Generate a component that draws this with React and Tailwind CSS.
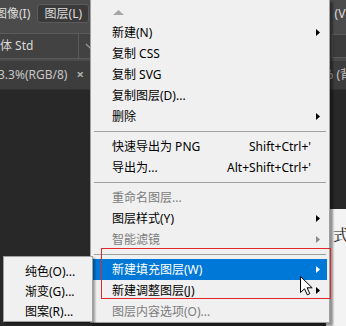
import React from 'react';

const items = [
  { label: '新建(N)', arrow: true },
  { label: '复制 CSS' },
  { label: '复制 SVG' },
  { label: '复制图层(D)...' },
  { label: '删除', arrow: true },
  'sep',
  { label: '快速导出为 PNG', shortcut: "Shift+Ctrl+'" },
  { label: '导出为...', shortcut: "Alt+Shift+Ctrl+'" },
  'sep',
  { label: '重命名图层...', disabled: true },
  { label: '图层样式(Y)', arrow: true },
  { label: '智能滤镜', arrow: true, disabled: true },
  'sep',
  { label: '新建填充图层(W)', arrow: true, active: true },
  { label: '新建调整图层(J)', arrow: true },
  { label: '图层内容选项(O)...', disabled: true },
];

const subItems = ['纯色(O)...', '渐变(G)...', '图案(R)...'];

const Arrow = ({ color }) => (
  <svg width="4" height="7" viewBox="0 0 4 7" className="shrink-0">
    <path d="M0 0 L4 3.5 L0 7 Z" fill={color} />
  </svg>
);

const MenuRow = ({ item }) => {
  const text = item.active ? 'text-white' : item.disabled ? 'text-[#7c7c7c]' : 'text-black';
  const arrowColor = item.active ? '#ffffff' : item.disabled ? '#8a8a8a' : '#000000';
  return (
    <div className={`flex items-center h-[21px] pl-[19px] pr-[7px] leading-[21px] ${text} ${item.active ? 'bg-[#0078d7]' : ''}`}>
      <span className="flex-1 whitespace-nowrap">{item.label}</span>
      {item.shortcut && <span className="mr-[5px] whitespace-nowrap">{item.shortcut}</span>}
      {item.arrow ? <Arrow color={arrowColor} /> : <span className="w-[4px]" />}
    </div>
  );
};

export default function App() {
  return (
    <div className="relative w-[346px] h-[326px] overflow-hidden flex flex-col bg-[#282828] text-[12px] font-['Noto_Sans','Noto_Sans_CJK_SC',sans-serif]">
      {/* menu bar */}
      <div className="h-[31px] shrink-0 bg-[#4b4b4b] flex items-start pt-[4px] text-[#dcdcdc]">
        <span className="ml-[-5px] h-[19px] leading-[19px] whitespace-nowrap">图像(I)</span>
        <span className="ml-[7px] w-[52px] h-[19px] leading-[17px] text-center rounded-[3px] bg-[#3a3a3a] border border-[#5c5c5c] whitespace-nowrap">图层(L)</span>
        <span className="ml-auto mr-[-3px] h-[19px] leading-[19px] whitespace-nowrap">(V)</span>
      </div>

      {/* options bar */}
      <div className="h-[30px] shrink-0 bg-[#4b4b4b] flex items-center text-[#d8d8d8]">
        <div className="w-[102px] h-[26px] flex items-center bg-[#424242] border border-[#5a5a5a] border-l-0">
          <span className="flex-1 whitespace-nowrap">体 Std</span>
          <span className="w-px h-full bg-[#5a5a5a]" />
          <svg width="22" height="10" viewBox="0 0 22 10">
            <path d="M7 3 L11 7 L15 3" stroke="#9a9a9a" strokeWidth="1.2" fill="none" />
          </svg>
        </div>
        <div className="ml-auto w-[14px] h-[24px] bg-[#3c3c3c] border border-[#5a5a5a] border-r-0" />
      </div>

      {/* document tabs */}
      <div className="h-[29px] shrink-0 bg-[#3d3d3d] flex items-center text-[#c6c6c6] border-b border-[#323232]">
        <span className="ml-[-2px] whitespace-nowrap">3.3%(RGB/8)</span>
        <span className="ml-[9px] text-[13px] font-bold text-[#b0b0b0]">×</span>
        <span className="ml-auto mr-[-6px] whitespace-nowrap">% (背</span>
      </div>

      {/* canvas */}
      <div className="flex-1 flex">
        <div className="flex-1" />
        <div className="w-[20px] flex flex-col">
          <div className="h-[119px]" />
          <div className="flex-1 bg-[#f3f3f3] pl-[7px] pt-[14px] text-[16px] text-[#222] font-['Noto_Serif_CJK_SC','Noto_Sans_CJK_SC',serif]">式</div>
        </div>
      </div>

      {/* main context menu */}
      <div className="absolute left-[90px] top-[-1px] w-[240px] bg-[#f0f0f0] border border-[#a0a0a0] px-[2px] shadow-[3px_3px_2px_rgba(0,0,0,0.4)]">
        <div className="h-[22px] pt-[10px] pl-[20px]">
          <svg width="11" height="5" viewBox="0 0 11 5" className="block">
            <path d="M0 5 L5.5 0 L11 5 Z" fill="#a6a6a6" />
          </svg>
        </div>
        {items.map((item, i) =>
          item === 'sep' ? (
            <div key={i} className="h-[9px] pt-[4px] px-[1px]">
              <div className="h-px bg-[#a0a0a0]" />
            </div>
          ) : (
            <MenuRow key={i} item={item} />
          )
        )}
      </div>

      {/* submenu */}
      <div className="absolute left-[3px] top-[256px] w-[90px] h-[66px] bg-[#f0f0f0] border border-[#a0a0a0] pt-[5px] shadow-[2px_2px_2px_rgba(0,0,0,0.35)]">
        {subItems.map((s) => (
          <div key={s} className="h-[20px] leading-[20px] pl-[21px] text-black whitespace-nowrap">{s}</div>
        ))}
      </div>

      {/* highlight box */}
      <div className="absolute left-[101px] top-[248px] w-[230px] h-[51px] border border-[#e3262b]" />

      {/* cursor */}
      <svg className="absolute left-[300px] top-[276px]" width="13" height="20" viewBox="0 0 13 20">
        <path d="M0.5 0.5 L0.5 16.5 L4.5 12.8 L7.3 18.8 L9.8 17.7 L7.1 11.8 L12.2 11.8 Z" fill="#ffffff" stroke="#000000" strokeWidth="1" strokeLinejoin="round" />
      </svg>
    </div>
  );
}
